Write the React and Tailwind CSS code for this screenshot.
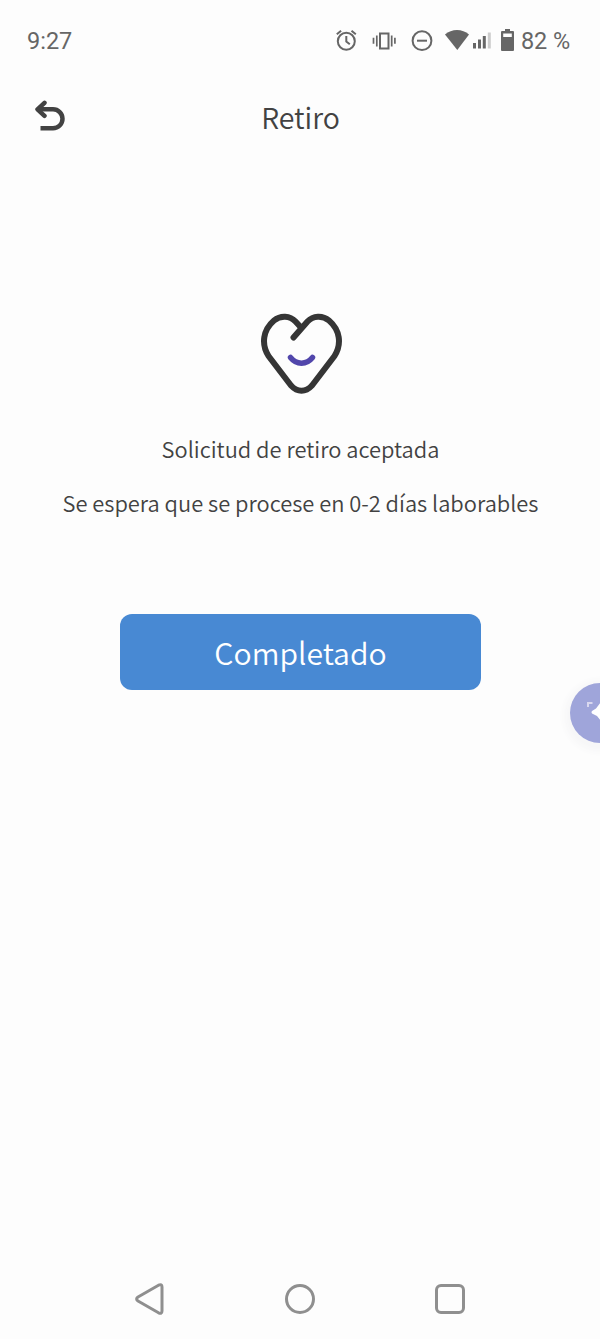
import { useState } from 'react'

const MESSAGES = [
  "Solicitud de retiro aceptada",
  "Se espera que se procese en 0-2 días laborables",
];

function StatusBar() {
  return (
    <div className="h-[82px] flex items-center pl-[27px] pr-[30px] text-[#666666] font-['Roboto',sans-serif] text-[23.5px]">
      <span className="pt-px">9:27</span>
      <div className="flex items-center ml-auto">
        {/* Alarm */}
        <svg className="w-6 h-6" viewBox="0 0 24 24" fill="none" stroke="currentColor" strokeWidth="2">
          <circle cx="12.3" cy="12.2" r="8.5" />
          <path d="M12.3 7v5.5l3.5 2.7M2.8 5.2l4.3-3.5M21.8 5.2l-4.3-3.5" />
        </svg>
        {/* Vibrate */}
        <svg className="w-6 h-6 ml-[14px]" viewBox="0 0 24 24" fill="none" stroke="currentColor" strokeWidth="2">
          <rect x="8" y="4.5" width="8.5" height="15" />
          <path d="M4.8 6.5v11M19.7 6.5v11M1.5 8.7v6M22.9 8.7v6" strokeWidth="1.7" />
        </svg>
        {/* Do not disturb */}
        <svg className="w-6 h-6 ml-[14px]" viewBox="0 0 24 24" fill="none" stroke="currentColor" strokeWidth="2">
          <circle cx="12" cy="11.7" r="9.4" />
          <path d="M7 11.7h10" />
        </svg>
        {/* Wifi */}
        <svg className="w-6 h-6 ml-[11px]" viewBox="0 0 24 24" fill="currentColor">
          <path d="M0 5.5C6.5-.6 17.5-.6 24 5.5L12.3 21Z" />
        </svg>
        {/* Signal */}
        <svg className="w-[19px] h-6 ml-[3px]" viewBox="0 0 19 24" fill="currentColor">
          <path d="M1 14h3v5.5H1zM6 10.5h3v9H6zM10.8 7h3v12.5h-3z" />
          <path d="M15.8 3.5h3v16h-3z" fill="#cccccc" />
        </svg>
        {/* Battery */}
        <svg className="w-[13px] h-6 ml-[10px]" viewBox="0 0 13 24" fill="currentColor">
          <path fillRule="evenodd" d="M4 0h5v2h3q1 0 1 1v18q0 1-1 1H1q-1 0-1-1V3q0-1 1-1h3zM2.2 4.5v3.5h8.6V4.5z" />
        </svg>
        <span className="ml-[7px] pt-px tracking-[-0.1px] whitespace-nowrap">82 %</span>
      </div>
    </div>
  )
}

function Header() {
  return (
    <header className="h-[73px] grid grid-cols-[100px_1fr_100px] items-center text-[#424242]">
      <button className="pl-[33px] pb-[4px]" aria-label="Volver">
        <svg className="w-[34px] h-[34px]" viewBox="0 0 34 34" fill="none" stroke="currentColor" strokeWidth="4.5">
          <path d="M11.5 2.8 4.5 9.3l7 6.5" strokeLinecap="round" strokeLinejoin="round" />
          <path d="M4.5 9.3H20a9.5 9.5 0 0 1 0 19H7.5" />
        </svg>
      </button>
      <h1 className="text-center text-[28.5px] leading-[44px] pb-[3px] pl-px font-[350]">Retiro</h1>
    </header>
  )
}

function HappyHeart() {
  return (
    <svg className="w-[84px] h-[84px]" viewBox="0 0 84 84" fill="none" strokeWidth="6" strokeLinecap="round">
      <path
        stroke="#353535"
        strokeLinejoin="round"
        d="M34.5 26.5 48.5 10.5C54 4.5 63.5 4 70 9.5C81 19 83 33 75.5 45L53 74.5C46.5 81.5 38.5 81.5 32 74.5L9.5 45C2 33 4 19 15 9.5C21.5 4 31 4.5 36.5 10.5L42 16.5"
      />
      <path stroke="#5146ab" strokeWidth="5.5" d="M31.5 46.5c6 7.5 16 7.5 22 0" />
    </svg>
  )
}

function NavBar() {
  return (
    <nav className="h-20 flex items-center justify-center gap-[118px] text-[#8f8f8f]">
      <svg className="w-8 h-8" viewBox="0 0 32 32" fill="none" stroke="currentColor" strokeWidth="3" strokeLinejoin="round">
        <path d="M4 14 24.5 2.2Q28 .8 28 4v24q0 3.2-3.5 1.8L4 18Q1.2 16 4 14Z" />
      </svg>
      <svg className="w-8 h-8" viewBox="0 0 32 32" fill="none" stroke="currentColor" strokeWidth="3">
        <circle cx="16" cy="16" r="13.5" />
      </svg>
      <svg className="w-8 h-8" viewBox="0 0 32 32" fill="none" stroke="currentColor" strokeWidth="3">
        <rect x="2.5" y="2.5" width="27" height="27" rx="4.5" />
      </svg>
    </nav>
  )
}

export default function App() {
  const [done, setDone] = useState(false);

  return (
    <div className="relative w-[600px] h-[1339px] flex flex-col overflow-hidden bg-[#fdfdfd] text-[#424242] font-['Noto_Sans_CJK_SC',sans-serif]">
      <StatusBar />
      <Header />
      <main className="flex-1 flex flex-col items-center pt-[156px] pl-px">
        <HappyHeart />
        <div className="mt-[27px] text-center text-[21.85px] leading-[54px] font-[350]">
          {MESSAGES.map((message) => (
            <p key={message} className="whitespace-nowrap">{message}</p>
          ))}
        </div>
        <button
          className="mt-[84px] w-[361px] h-[76px] pb-px rounded-[12px] bg-[#4889d3] text-white text-[30.2px] leading-[48px] font-[350]"
          disabled={done}
          onClick={() => setDone(true)}
        >
          Completado
        </button>
      </main>
      <NavBar />

      {/* Floating assistant bubble, half off screen */}
      <div className="absolute left-[570px] top-[683px] w-[60px] h-[60px] rounded-full bg-[#9fa5da] shadow-[0_3px_6px_6px_#f7f7f8]">
        <svg className="w-[60px] h-[60px]" viewBox="0 0 60 60">
          <path d="M22 28 26 25.5 31 19v19l-4-5-5-2.5q-1-1.2 0-2.5Z" fill="#ffffff" />
          <path d="M18 24v-4h4.5" fill="none" stroke="#d9d8ef" strokeWidth="2" />
        </svg>
      </div>
    </div>
  )
}
